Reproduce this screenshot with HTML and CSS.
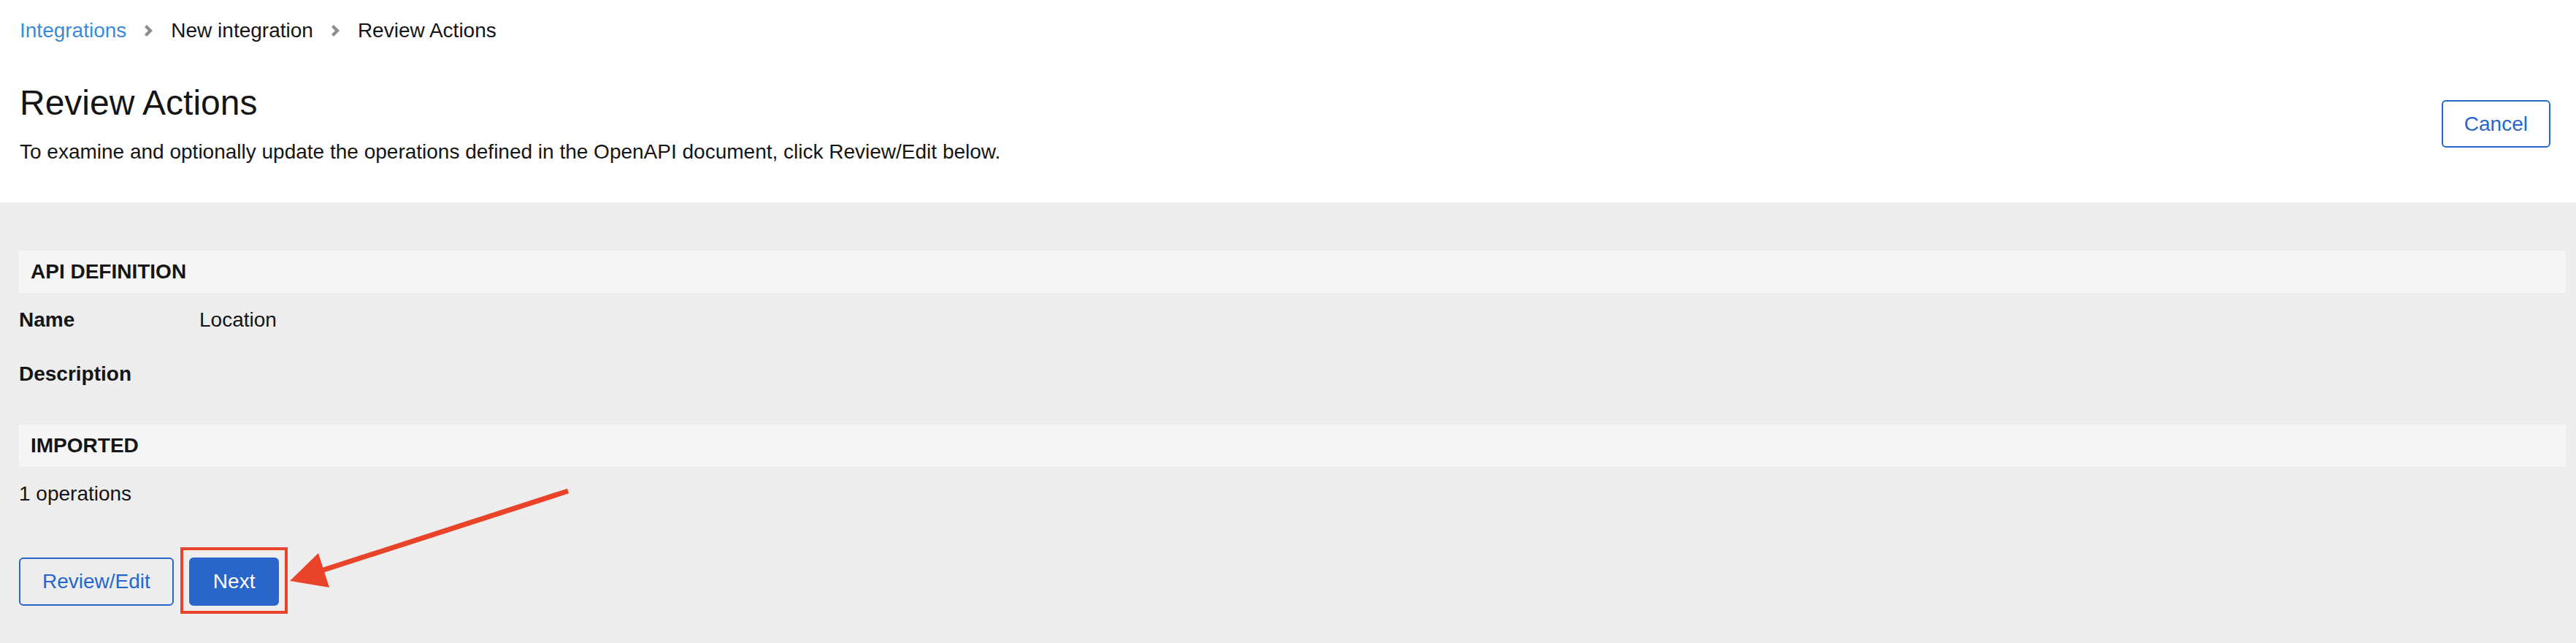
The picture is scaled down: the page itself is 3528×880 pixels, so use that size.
FILE: index.html
```html
<!DOCTYPE html>
<html lang="en">
<head>
<meta charset="utf-8">
<title>Review Actions</title>
<link rel="stylesheet" href="styles.css">
</head>
<body>
<div class="page">
  <header class="head">
    <nav class="crumbs">
      <a class="crumb-link" href="#">Integrations</a>
      <svg class="chev" viewBox="0 0 11 16" width="11" height="16"><polygon points="0,3 3,0 11,8 3,16 0,13 5,8" fill="#8a8d90"/></svg>
      <span class="crumb">New integration</span>
      <svg class="chev" viewBox="0 0 11 16" width="11" height="16"><polygon points="0,3 3,0 11,8 3,16 0,13 5,8" fill="#8a8d90"/></svg>
      <span class="crumb">Review Actions</span>
    </nav>
    <div class="title-row">
      <div class="title-block">
        <h1 class="title">Review Actions</h1>
        <p class="lead">To examine and optionally update the operations defined in the OpenAPI document, click Review/Edit below.</p>
      </div>
      <button class="btn btn-secondary">Cancel</button>
    </div>
  </header>
  <main class="content">
    <section class="group">
      <h2 class="bar">API DEFINITION</h2>
      <dl class="props">
        <div class="prop"><dt>Name</dt><dd>Location</dd></div>
        <div class="prop prop-next"><dt>Description</dt><dd></dd></div>
      </dl>
    </section>
    <section class="group group-imported">
      <h2 class="bar">IMPORTED</h2>
      <p class="ops">1 operations</p>
    </section>
    <div class="actions">
      <button class="btn btn-secondary">Review/Edit</button>
      <span class="highlight"><button class="btn btn-primary">Next</button></span>
    </div>
  </main>
  <svg class="arrow" viewBox="0 0 400 150" width="400" height="150">
    <line x1="388" y1="12" x2="50" y2="121" stroke="#e9432a" stroke-width="7"/>
    <polygon points="7,135 46,97 61,144" fill="#e9432a"/>
  </svg>
</div>
</body>
</html>
```

FILE: styles.css
```css
* { box-sizing: border-box; }

html, body {
  margin: 0;
  padding: 0;
}

body {
  font-family: "Liberation Sans", Arial, sans-serif;
  font-size: 28px;
  line-height: 40px;
  color: #151515;
  background: #ededed;
}

.page {
  position: relative;
  min-height: 880px;
}

.head {
  background: #ffffff;
  padding: 22px 35px 49px 27px;
}

.crumbs {
  display: flex;
  align-items: center;
  height: 40px;
}

.crumb-link {
  color: #3a8ad8;
  text-decoration: none;
}

.crumb {
  color: #151515;
}

.chev {
  display: block;
  margin: 0 25px;
}

.title-row {
  display: flex;
  justify-content: space-between;
  align-items: center;
  margin-top: 49px;
}

.title {
  margin: 0;
  font-size: 48px;
  line-height: 60px;
  font-weight: 400;
}

.lead {
  margin: 17px 0 0;
}

.btn {
  font-family: inherit;
  font-size: 28px;
  line-height: 40px;
  height: 66px;
  padding: 0 30px;
  border-radius: 6px;
  border: 2px solid #2866c9;
  cursor: pointer;
}

.btn-secondary {
  background: transparent;
  color: #2866c9;
}

.head .btn-secondary {
  height: 65px;
  padding: 0 29px;
}

.btn-primary {
  background: #2866c9;
  color: #ffffff;
  padding: 0 31px;
}

.content {
  padding: 66px 14px 51px 26px;
}

.bar {
  margin: 0;
  height: 58px;
  line-height: 58px;
  padding: 0 16px;
  background: #f5f5f5;
  font-size: 28px;
  font-weight: 700;
}

.props {
  margin: 17px 0 0;
}

.prop {
  display: grid;
  grid-template-columns: 247px 1fr;
}

.prop-next {
  margin-top: 34px;
}

.prop dt {
  font-weight: 700;
}

.prop dd {
  margin: 0;
}

.group-imported {
  margin-top: 49px;
}

.ops {
  margin: 17px 0 0;
}

.actions {
  display: flex;
  align-items: flex-start;
  gap: 21px;
  margin-top: 67px;
}

.highlight {
  position: relative;
  display: block;
}

.highlight::after {
  content: "";
  position: absolute;
  left: -12px;
  right: -12px;
  top: -14px;
  bottom: -11px;
  border: 4px solid #e9432a;
  pointer-events: none;
}

.arrow {
  position: absolute;
  left: 390px;
  top: 660px;
  overflow: visible;
}
```
